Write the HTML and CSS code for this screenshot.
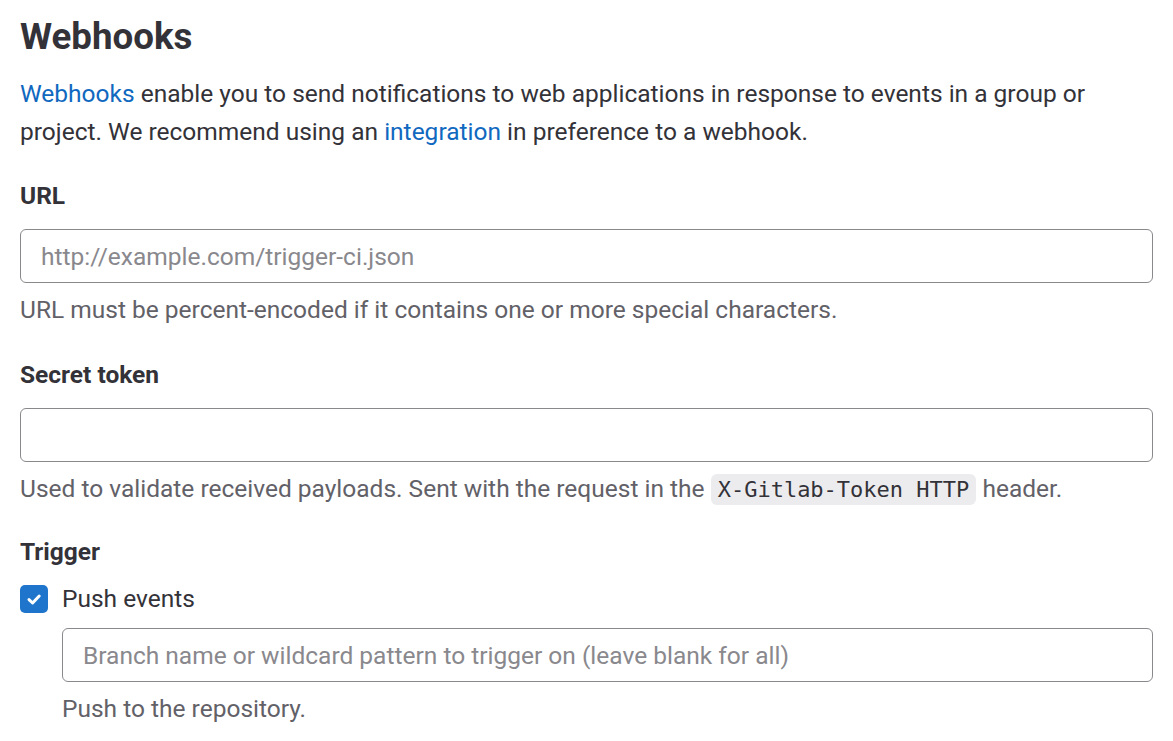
FILE: index.html
```html
<!DOCTYPE html>
<html lang="en">
<head>
<meta charset="utf-8">
<title>Webhooks</title>
<link rel="stylesheet" href="styles.css">
</head>
<body>
<main class="page">
  <h1 class="title">Webhooks</h1>
  <p class="intro"><a href="#" class="link">Webhooks</a> enable you to send notifications to web applications in response to events in a group or project. We recommend using an <a href="#" class="link">integration</a> in preference to a webhook.</p>

  <div class="field field-url">
    <label class="label">URL</label>
    <input class="input" type="text" placeholder="http://example.com/trigger-ci.json">
    <p class="help">URL must be percent-encoded if it contains one or more special characters.</p>
  </div>

  <div class="field field-token">
    <label class="label">Secret token</label>
    <input class="input" type="text">
    <p class="help">Used to validate received payloads. Sent with the request in the <code class="code">X-Gitlab-Token HTTP</code> header.</p>
  </div>

  <div class="field field-trigger">
    <label class="label">Trigger</label>
    <div class="check-row">
      <span class="checkbox"><svg viewBox="0 0 28 28" width="28" height="28"><path d="M9 14.6l3.6 3.4 6.6-7" fill="none" stroke="#fff" stroke-width="3" stroke-linecap="round" stroke-linejoin="round"/></svg></span>
      <span class="check-label">Push events</span>
    </div>
    <div class="check-body">
      <input class="input" type="text" placeholder="Branch name or wildcard pattern to trigger on (leave blank for all)">
      <p class="help">Push to the repository.</p>
    </div>
  </div>
</main>
</body>
</html>
```
FILE: styles.css
```css
* { box-sizing: border-box; }
html, body { margin: 0; padding: 0; background: #fff; }
body {
  font-family: Roboto, "Noto Sans", "Liberation Sans", sans-serif;
  color: #333238;
  font-size: 24.5px;
}
.page {
  padding: 14px 20px 0 20px;
  width: 1173px;
}
.title {
  margin: 0;
  font-size: 36.7px;
  line-height: 46px;
  font-weight: 700;
  color: #333238;
}
.intro {
  margin: 15px 0 0 0;
  font-size: 24.5px;
  line-height: 38px;
}
.link { color: #1068bf; text-decoration: none; }
.field { display: flex; flex-direction: column; }
.field-url { margin-top: 30px; }
.field-token { margin-top: 34px; }
.field-trigger { margin-top: 31px; }
.label {
  font-weight: 700;
  font-size: 24.5px;
  line-height: 30px;
  color: #333238;
}
.input {
  margin-top: 18px;
  height: 54px;
  width: 100%;
  border: 1.5px solid #89888d;
  border-radius: 6px;
  padding: 0 20px;
  font-family: Roboto, "Noto Sans", "Liberation Sans", sans-serif;
  font-size: 24.5px;
  color: #333238;
  background: #fff;
  outline: none;
}
.input::placeholder { color: #89888d; }
.help {
  margin: 11px 0 0 0;
  font-size: 24.5px;
  line-height: 32px;
  color: #626168;
}
.code {
  font-family: "DejaVu Sans Mono", "Liberation Mono", monospace;
  font-size: 22px;
  background: #ececef;
  color: #333238;
  border-radius: 6px;
  padding: 3px 7px;
}
.check-row {
  display: flex;
  align-items: center;
  gap: 14px;
  margin-top: 17px;
}
.checkbox {
  width: 28px;
  height: 28px;
  border-radius: 5px;
  background: #1f75cb;
  display: flex;
  align-items: center;
  justify-content: center;
  flex: none;
}
.checkbox svg { display: block; }
.check-label { font-size: 24.5px; line-height: 30px; color: #333238; }
.check-body { padding-left: 42px; display: flex; flex-direction: column; }
.check-body .input { margin-top: 14px; }
```
